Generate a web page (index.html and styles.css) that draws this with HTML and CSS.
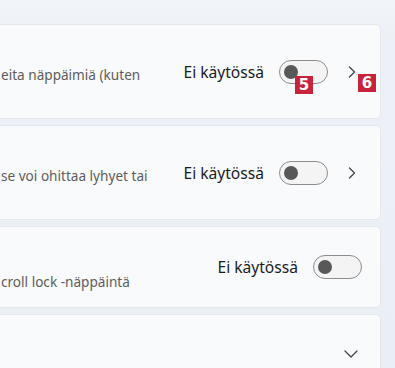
FILE: index.html
```html
<!DOCTYPE html>
<html lang="fi">
<head>
<meta charset="utf-8">
<link rel="stylesheet" href="styles.css">
</head>
<body>
<div class="list">
  <div class="card tall">
    <div class="info"><span class="desc">eita näppäimiä (kuten</span></div>
    <span class="state">Ei käytössä</span>
    <span class="toggle"><span class="knob"></span><span class="badge b5">5</span></span>
    <span class="chev">
      <svg width="8" height="12" viewBox="0 0 8 12"><path d="M1.5 1 L6.5 6 L1.5 11" fill="none" stroke="#444" stroke-width="1.3" stroke-linecap="round" stroke-linejoin="round"/></svg>
      <span class="badge b6">6</span>
    </span>
  </div>
  <div class="card tall">
    <div class="info"><span class="desc">se voi ohittaa lyhyet tai</span></div>
    <span class="state">Ei käytössä</span>
    <span class="toggle"><span class="knob"></span></span>
    <span class="chev">
      <svg width="8" height="12" viewBox="0 0 8 12"><path d="M1.5 1 L6.5 6 L1.5 11" fill="none" stroke="#444" stroke-width="1.3" stroke-linecap="round" stroke-linejoin="round"/></svg>
    </span>
  </div>
  <div class="card mid">
    <div class="info"><span class="desc low">croll lock -näppäintä</span></div>
    <span class="state">Ei käytössä</span>
    <span class="toggle"><span class="knob"></span></span>
  </div>
  <div class="card last">
    <div class="info"></div>
    <span class="chev down">
      <svg width="14" height="8" viewBox="0 0 14 8"><path d="M1 1 L7 7 L13 1" fill="none" stroke="#444" stroke-width="1.3" stroke-linecap="round" stroke-linejoin="round"/></svg>
    </span>
  </div>
</div>
</body>
</html>
```

FILE: styles.css
```css
html, body {
  margin: 0;
  padding: 0;
}
body {
  width: 395px;
  height: 368px;
  overflow: hidden;
  background: linear-gradient(180deg, #f1f4f8 0px, #edf1f7 40px, #eaeff6 368px);
  font-family: "Noto Sans", "Open Sans", sans-serif;
}
.list {
  display: flex;
  flex-direction: column;
  gap: 6px;
  padding-top: 24px;
  margin-left: -12px;
  width: 393px;
  height: 344px;
  overflow: hidden;
}
.card {
  box-sizing: border-box;
  flex-shrink: 0;
  display: flex;
  align-items: center;
  background: #f9fafb;
  border: 1px solid #e4e7eb;
  border-radius: 5px;
  padding: 0 24px 0 12px;
}
.card.tall { height: 95px; }
.card.mid { height: 82px; padding-right: 18px; }
.card.last { height: 80px; padding-right: 22px; }
.info {
  flex: 1;
  min-width: 0;
  display: flex;
  flex-direction: column;
}
.desc {
  font-size: 13.6px;
  color: #5d5d5d;
  white-space: nowrap;
  margin-top: 6px;
}
.desc.low { margin-top: 28px; }
.state {
  font-size: 15.6px;
  color: #1b1b1b;
  margin-right: 15px;
}
.toggle {
  position: relative;
  box-sizing: border-box;
  width: 49px;
  height: 24px;
  border: 1px solid #8c8c8c;
  border-radius: 12px;
  background: #f4f4f4;
  display: flex;
  align-items: center;
  padding-left: 4px;
}
.knob {
  width: 14px;
  height: 14px;
  border-radius: 50%;
  background: #585858;
}
.chev {
  position: relative;
  display: flex;
  align-items: center;
  margin-left: 20px;
}
.chev.down { margin-left: 0; }
.badge {
  position: absolute;
  width: 18px;
  height: 18px;
  background: #c8233a;
  color: #fff;
  font-family: "DejaVu Sans", sans-serif;
  font-weight: bold;
  font-size: 15px;
  line-height: 18px;
  text-align: center;
}
.b5 { left: 15px; top: 15px; }
.b6 { left: 10px; top: 8px; }
```
